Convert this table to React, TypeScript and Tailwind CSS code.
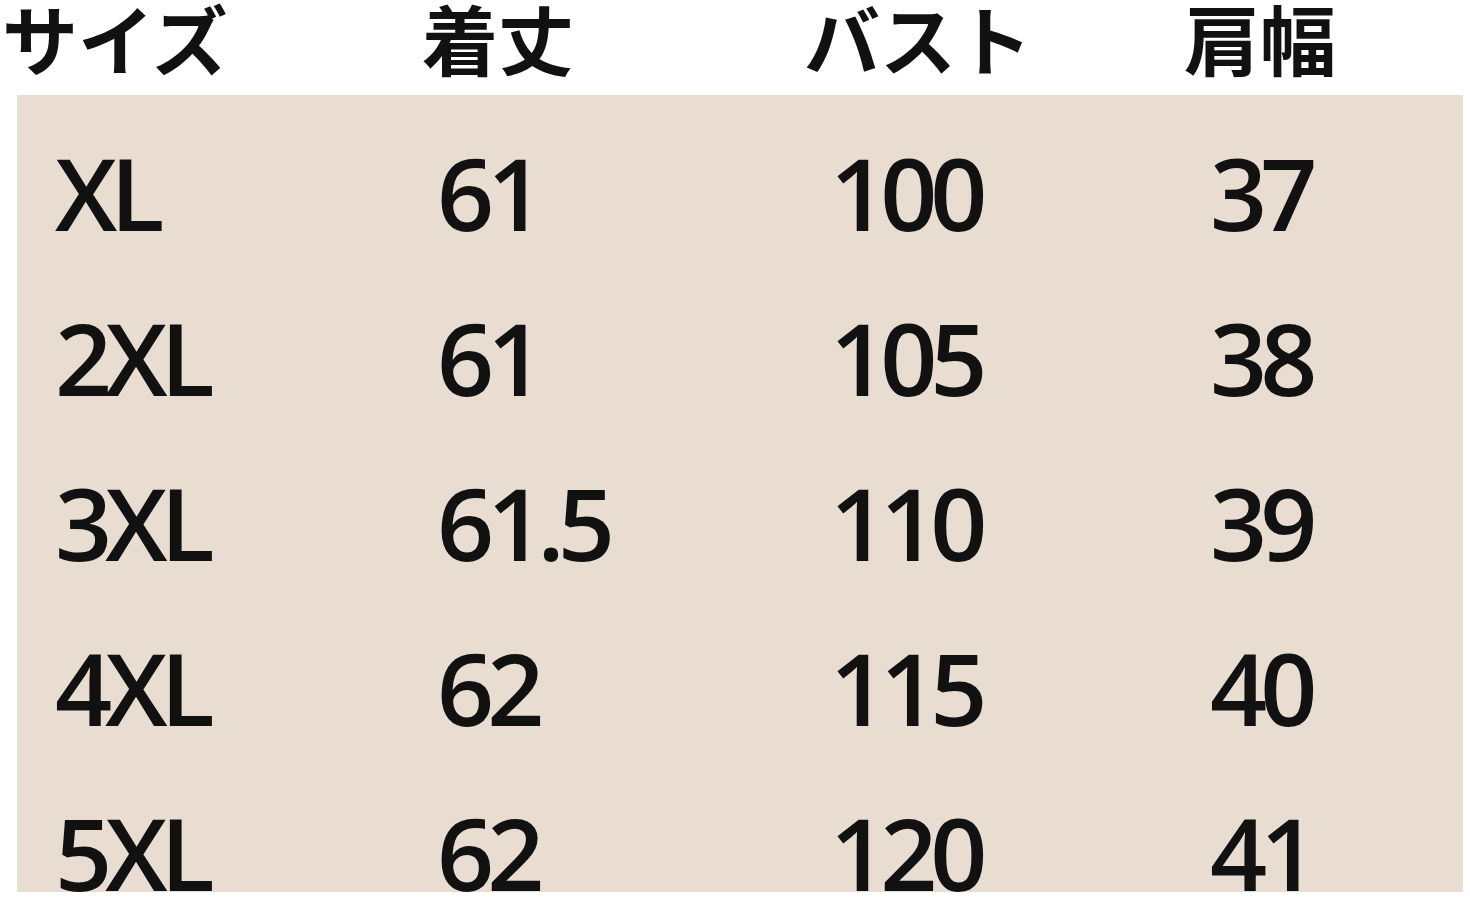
const headers = ['サイズ', '着丈', 'バスト', '肩幅'];

const rows = [
  ['XL', '61', '100', '37'],
  ['2XL', '61', '105', '38'],
  ['3XL', '61.5', '110', '39'],
  ['4XL', '62', '115', '40'],
  ['5XL', '62', '120', '41'],
];

const App = () => {
  return (
    <div className="w-[1470px] h-[897px] bg-white overflow-hidden text-[#111]">
      <div
        className="h-[95px] pl-[2px] pt-[3px] grid grid-cols-[420px_382px_380px_1fr] items-start font-bold text-[76px] leading-[0.9]"
        style={{ fontFamily: '"Noto Sans CJK JP", "Noto Sans", sans-serif' }}
      >
        {headers.map((h) => (
          <div key={h}>{h}</div>
        ))}
      </div>
      <div className="ml-[17px] w-[1446px] h-[797px] bg-[#e9ddd1] overflow-hidden pt-[15px] pl-[38px]">
        {rows.map((r, i) => (
          <div
            key={i}
            className="h-[165px] grid grid-cols-[382px_393px_380px_1fr] items-center text-[100px] leading-[165px] font-semibold tracking-[-0.07em]"
            style={{ fontFamily: '"Open Sans", "Noto Sans", sans-serif' }}
          >
            {r.map((c, j) => (
              <div key={j}>{c}</div>
            ))}
          </div>
        ))}
      </div>
    </div>
  );
};

export default App;
